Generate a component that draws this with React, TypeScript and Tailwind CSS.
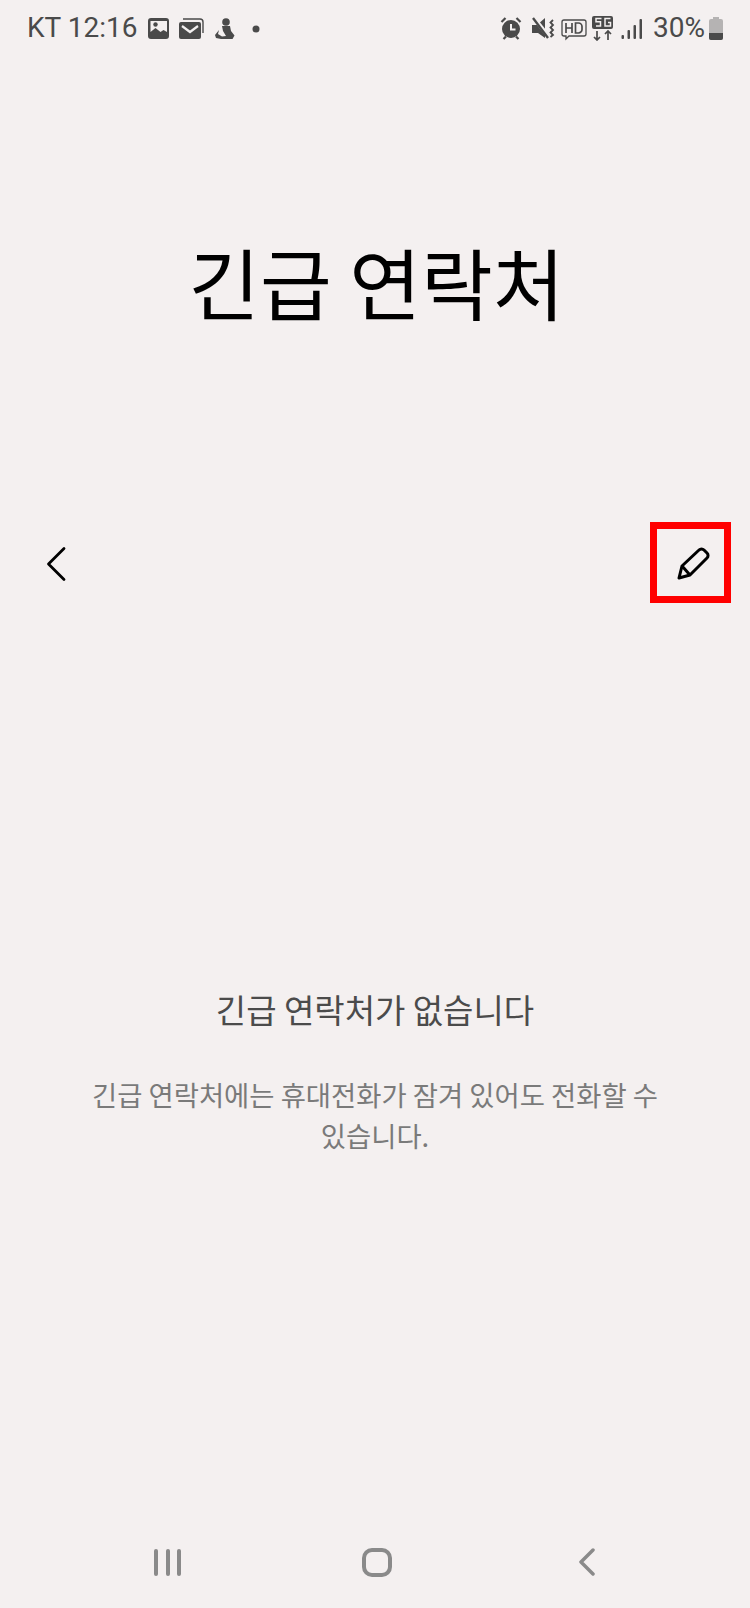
const font = { fontFamily: '"Noto Sans CJK KR", Roboto, sans-serif' };

function StatusBar() {
  return (
    <div className="flex h-[56px] items-center justify-between pl-[27px] pr-[26px] text-[#4a4a4a]">
      <div className="flex items-center">
        <span className="text-[28px] leading-none font-['Roboto',sans-serif]">KT 12:16</span>
        <svg width="115" height="26" viewBox="0 0 115 26" className="ml-[11px]" fill="#4a4a4a">
          <path fillRule="evenodd" d="M3 3h15a3 3 0 0 1 3 3v15a3 3 0 0 1-3 3H3a3 3 0 0 1-3-3V6a3 3 0 0 1 3-3Zm-.500 3v11l5-4 5 4 3-2 3.500 2V6Z" />
          <circle cx="7.500" cy="9.500" r="2.200" />
          <path d="M33 7h18a2 2 0 0 1 2 2v13a2 2 0 0 1-2 2H33a2 2 0 0 1-2-2V9a2 2 0 0 1 2-2Z" />
          <path d="M34 11l8 6 8-6" fill="none" stroke="#f3f0f0" strokeWidth="2.200" />
          <path d="M35 4h17a3 3 0 0 1 3 3v11" fill="none" stroke="#4a4a4a" strokeWidth="1.400" />
          <circle cx="78" cy="7" r="3.800" />
          <path d="M74 11h8l1 5 3.500 4.500-2 3.500H73l-5-1-1-3 4-5-1 4 4 2.500 4-.500-3-5Z" />
          <circle cx="108" cy="14" r="3.500" />
        </svg>
      </div>
      <div className="flex items-center">
        <svg width="142" height="26" viewBox="0 0 142 26" fill="#4a4a4a">
          <circle cx="11" cy="14" r="9" />
          <path d="M11 9v5.500h4.500" fill="none" stroke="#f3f0f0" strokeWidth="2" />
          <path d="M1.500 7l4-4M20.500 7l-4-4M3.500 24l2.500-2.500M18.500 24 16 21.500" stroke="#4a4a4a" strokeWidth="2.200" />
          <path d="M32 10h5l8-7v20l-7-5h-6Z" />
          <path d="M34 3l15 19" stroke="#f3f0f0" strokeWidth="4" />
          <path d="M33 3l15 20" stroke="#4a4a4a" strokeWidth="2.400" />
          <path d="M53 5l-2.500 2.500L53 10l-2.500 2.500L53 15l-2.500 2.500L53 20l-2.500 2" fill="none" stroke="#4a4a4a" strokeWidth="1.800" />
          <path d="M64 5h20a2 2 0 0 1 2 2v12a2 2 0 0 1-2 2H69l-3 3v-3h-2a2 2 0 0 1-2-2V7a2 2 0 0 1 2-2Z" fill="none" stroke="#4a4a4a" strokeWidth="1.300" />
          <path d="M66 8v10M72 8v10M66 13h6M75.500 8v10h3a3.500 3.500 0 0 0 3.500-3.500v-3A3.500 3.500 0 0 0 78.500 8Z" fill="none" stroke="#4a4a4a" strokeWidth="1.700" />
          <rect x="92" y="1" width="21" height="13" rx="2" />
          <path d="M101.500 3.500H96v3.300h4.500v4.200H96M110.500 3.500H105v7.500h5.500V7.500h-2.500" fill="none" stroke="#f3f0f0" strokeWidth="1.500" />
          <path d="M97 16v9M94 22l3 3 3-3M108 25v-9M105 19l3-3 3 3" fill="none" stroke="#4a4a4a" strokeWidth="1.700" />
          <rect x="121.500" y="20" width="2.500" height="4" rx="1" />
          <rect x="127.500" y="15" width="2.500" height="9" rx="1" />
          <rect x="133.500" y="10" width="2.500" height="14" rx="1" />
          <rect x="139.500" y="4" width="2.500" height="20" rx="1" />
        </svg>
        <span className="ml-[11px] text-[28px] leading-none font-['Roboto',sans-serif]">30%</span>
        <svg width="16" height="23" viewBox="0 0 16 23" className="ml-[3px]">
          <path d="M5 0h6v2h2a2 2 0 0 1 2 2v17a2 2 0 0 1-2 2H3a2 2 0 0 1-2-2V4a2 2 0 0 1 2-2h2Z" fill="#b5b3b3" />
          <path d="M1 16h14v5a2 2 0 0 1-2 2H3a2 2 0 0 1-2-2Z" fill="#4a4a4a" />
        </svg>
      </div>
    </div>
  );
}

export default function App() {
  return (
    <div className="flex h-[1608px] w-[750px] flex-col overflow-hidden bg-[#f4f0f0]" style={font}>
      <StatusBar />
      <h1 className="mt-[170px] pl-[3px] text-center text-[78px] leading-[110px] font-normal text-black">긴급 연락처</h1>
      <div className="mt-[186px] flex h-[81px] items-center justify-between pl-[44px] pr-[19px]">
        <svg width="24" height="36" viewBox="0 0 24 36" className="mt-[2px]" fill="none" stroke="#000" strokeWidth="2.800" strokeLinecap="round" strokeLinejoin="round">
          <path d="M20 2.500 4.500 18 20 33.500" />
        </svg>
        <div className="flex h-[81px] w-[81px] items-center justify-center border-[7px] border-[#ff0000]">
          <svg width="34" height="34" viewBox="0 0 34 34" className="ml-[5px]" fill="none" stroke="#000" strokeWidth="3" strokeLinejoin="round">
            <path d="M3 32 6 20 23 4a3.500 3.500 0 0 1 5 0l3 3a3.500 3.500 0 0 1 0 5L14 29Z" />
            <path d="M6 20l8 9" />
          </svg>
        </div>
      </div>
      <div className="mt-[383px] flex flex-col items-center text-center">
        <p className="text-[33px] leading-[46px] text-[#4b4b4b]">긴급 연락처가 없습니다</p>
        <p className="mt-[42px] w-[600px] text-[27.4px] leading-[41px] break-keep text-[#7a7a7a]">
          긴급 연락처에는 휴대전화가 잠겨 있어도 전화할 수 있습니다.
        </p>
      </div>
      <div className="mt-auto mb-[29px] flex h-[34px] items-center pl-[154px]">
        <div className="flex h-[27px] w-[27px] justify-between">
          <span className="h-full w-[4px] rounded-full bg-[#8a8a8a]" />
          <span className="h-full w-[4px] rounded-full bg-[#8a8a8a]" />
          <span className="h-full w-[4px] rounded-full bg-[#8a8a8a]" />
        </div>
        <div className="ml-[181px] h-[29px] w-[30px] rounded-[10px] border-[4px] border-[#8a8a8a]" />
        <svg width="18" height="28" viewBox="0 0 18 28" className="ml-[186px]" fill="none" stroke="#8a8a8a" strokeWidth="3.500" strokeLinecap="round" strokeLinejoin="round">
          <path d="M15 2 3 14l12 12" />
        </svg>
      </div>
    </div>
  );
}
